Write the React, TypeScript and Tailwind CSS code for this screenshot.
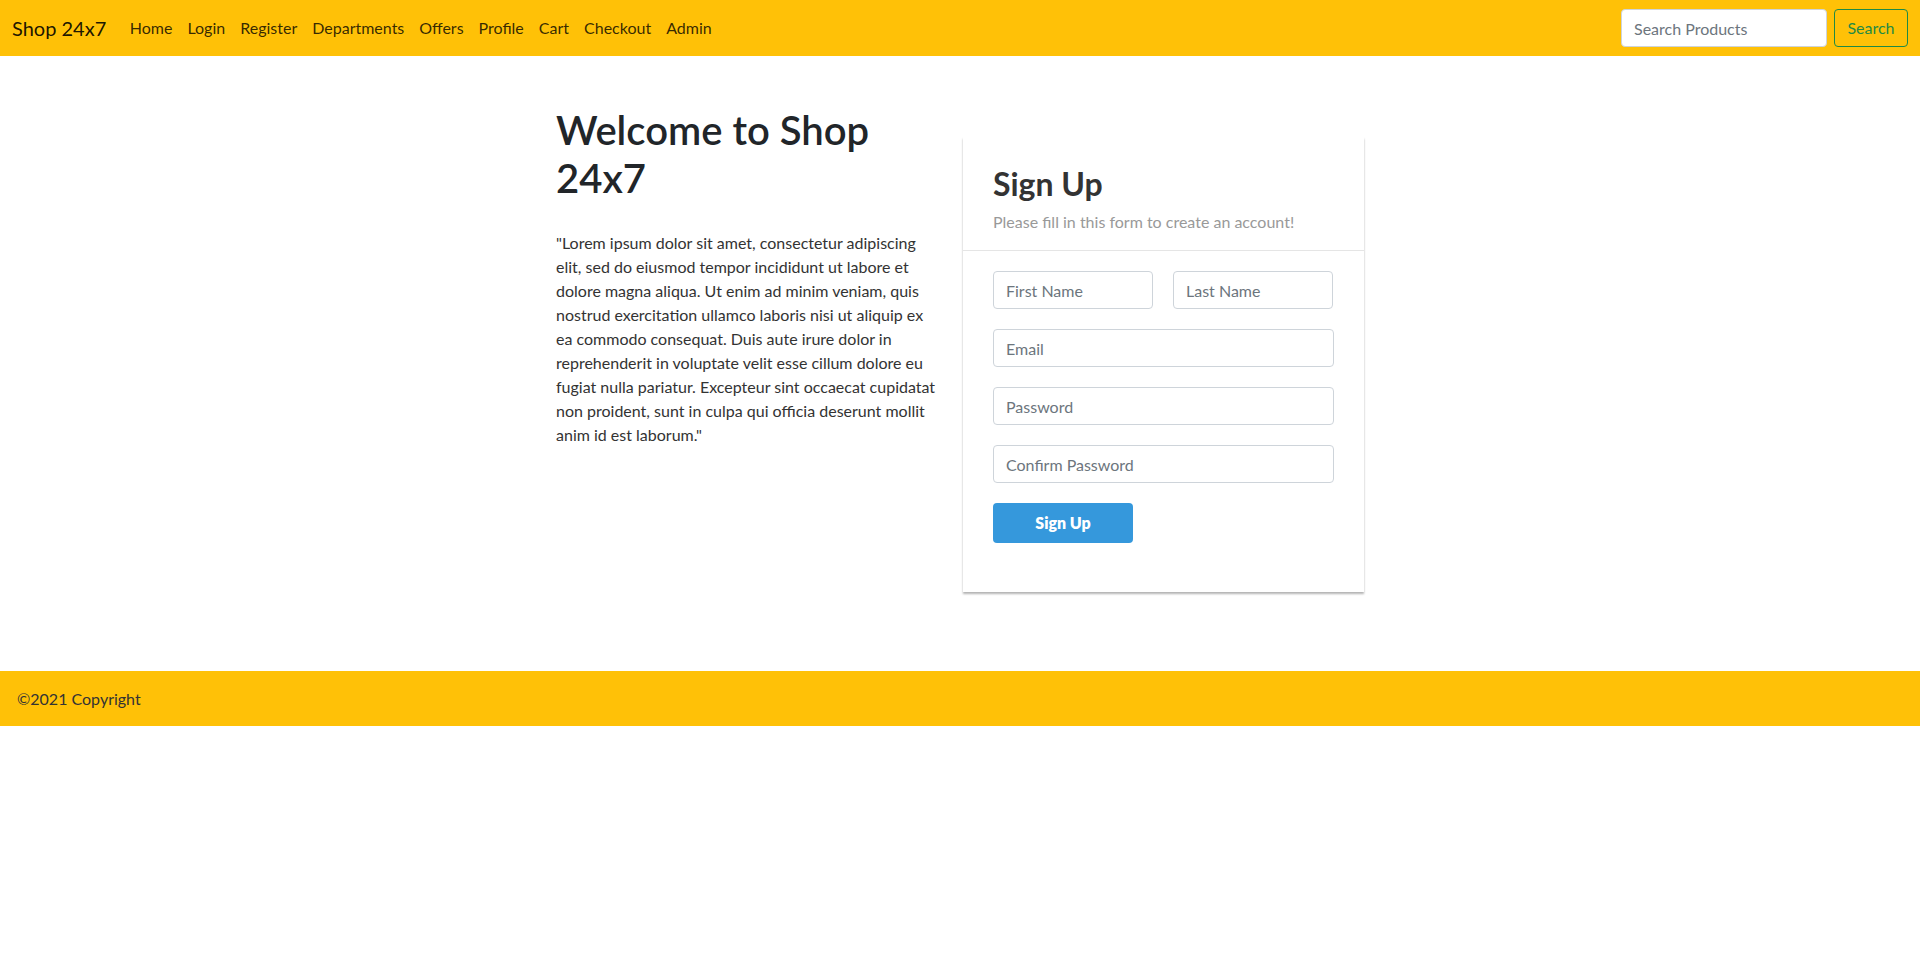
import React from "react";

const para = [
  '"Lorem ipsum dolor sit amet, consectetur adipiscing',
  "elit, sed do eiusmod tempor incididunt ut labore et",
  "dolore magna aliqua. Ut enim ad minim veniam, quis",
  "nostrud exercitation ullamco laboris nisi ut aliquip ex",
  "ea commodo consequat. Duis aute irure dolor in",
  "reprehenderit in voluptate velit esse cillum dolore eu",
  "fugiat nulla pariatur. Excepteur sint occaecat cupidatat",
  "non proident, sunt in culpa qui officia deserunt mollit",
  'anim id est laborum."',
];

const navLinks = ["Home", "Login", "Register", "Departments", "Offers", "Profile", "Cart", "Checkout", "Admin"];

function Field({ placeholder, type = "text", className = "" }: { placeholder: string; type?: string; className?: string }) {
  return (
    <input
      type={type}
      placeholder={placeholder}
      className={
        "block h-[38px] rounded-[4px] border border-[#ced4da] bg-white px-[12px] text-[16px] text-[#495057] placeholder:text-[#6c757d] outline-none " +
        className
      }
    />
  );
}

export default function App() {
  return (
    <div className="min-h-screen bg-white font-['Lato','Open_Sans',sans-serif] text-[#212529]">
      <nav className="flex h-[56px] items-center bg-[#ffc107] px-[12px]">
        <span className="mr-[16px] text-[20px] leading-[30px] text-[rgba(0,0,0,0.9)]">Shop 24x7</span>
        <ul className="flex items-center">
          {navLinks.map((l) => (
            <li key={l} className="px-[7.5px] text-[16px] leading-[24px] text-[rgba(0,0,0,0.8)]">
              {l}
            </li>
          ))}
        </ul>
        <div className="ml-auto flex items-center gap-[7px]">
          <Field placeholder="Search Products" className="w-[206px]" />
          <button className="h-[38px] w-[74px] rounded-[4px] border border-[#1f8a45] text-[16px] text-[#1f8a45]">
            Search
          </button>
        </div>
      </nav>

      <main className="flex justify-center gap-[17px] pt-[50px] pb-[79px]">
        <div className="w-[390px]">
          <h1 className="text-[40px] font-semibold leading-[48px] text-[#212529]">
            Welcome to Shop
            <br />
            24x7
          </h1>
          <p className="mt-[29px] text-[16px] leading-[24px] text-[#333]">
            {para.map((line, i) => (
              <span key={i} className="block whitespace-nowrap">
                {line}
              </span>
            ))}
          </p>
        </div>

        <div className="mt-[31px] h-[455px] w-[401px] bg-white shadow-[0_2px_2px_rgba(0,0,0,0.3)]">
          <div className="border-b border-[#e5e5e5] px-[30px] pt-[28px] pb-[17px]">
            <h2 className="text-[32px] font-bold leading-[38px] text-[#333]">Sign Up</h2>
            <p className="mt-[8px] text-[16px] leading-[22px] text-[#999]">Please fill in this form to create an account!</p>
          </div>
          <form className="flex flex-col gap-[20px] px-[30px] pt-[20px]">
            <div className="flex gap-[20px]">
              <Field placeholder="First Name" className="w-[160px]" />
              <Field placeholder="Last Name" className="w-[160px]" />
            </div>
            <Field placeholder="Email" type="email" className="w-full" />
            <Field placeholder="Password" type="password" className="w-full" />
            <Field placeholder="Confirm Password" type="password" className="w-full" />
            <button
              type="button"
              className="h-[40px] w-[140px] rounded-[4px] bg-[#3598dc] text-[16px] font-extrabold text-white"
            >
              Sign Up
            </button>
          </form>
        </div>
      </main>

      <footer className="flex h-[55px] items-center bg-[#ffc107] px-[17px] text-[16px] text-[#333]">
        ©2021 Copyright
      </footer>
    </div>
  );
}
